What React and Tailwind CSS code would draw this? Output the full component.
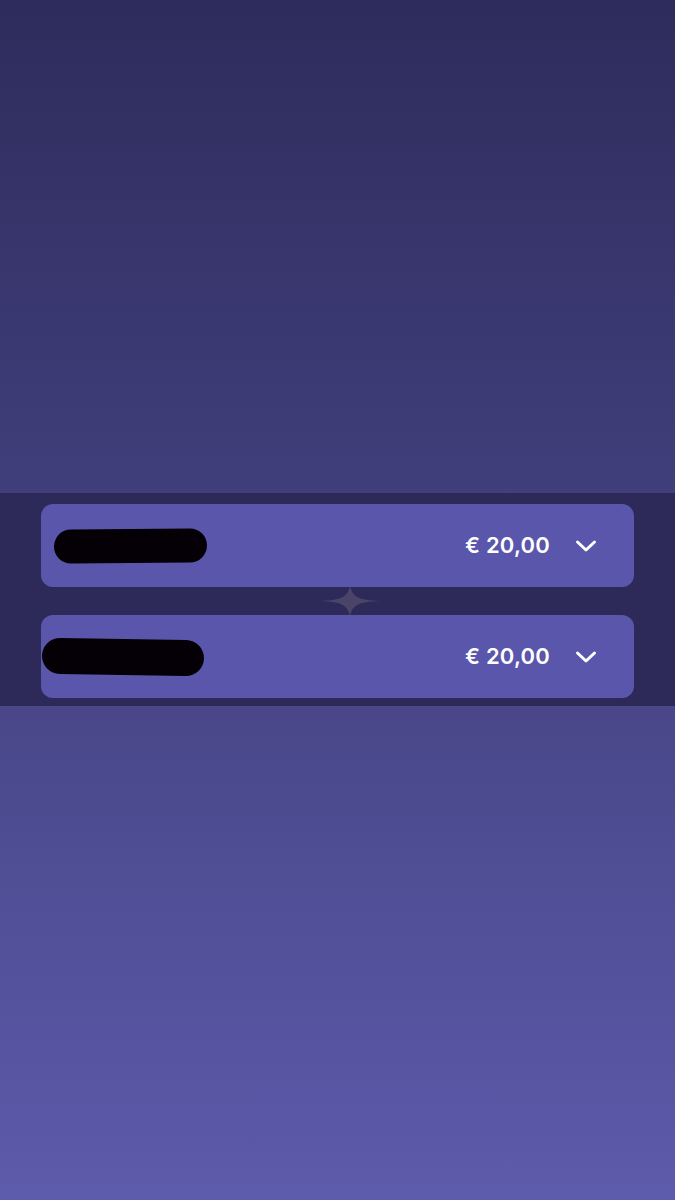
import React from 'react';

// bedragen in de lijst (namen zijn weggelakt in het origineel)
const rows = [
  { id: 1, amount: '€ 20,00', blob: 'ml-[13px] w-[153px] h-[34px] -rotate-[0.5deg]' },
  { id: 2, amount: '€ 20,00', blob: 'ml-[1px] w-[162px] h-[36px] rotate-[1deg]' },
];

const Chevron = () => (
  <svg width="22" height="14" viewBox="0 0 22 14" fill="none" className="text-white">
    <path d="M2.5 3 L11 11 L19.5 3" stroke="currentColor" strokeWidth="3" strokeLinecap="round" strokeLinejoin="round" />
  </svg>
);

const Row = ({ row }) => (
  <div className="h-[83px] rounded-[12px] bg-[#5a56ac] flex items-center pr-[37px]">
    <div className={`${row.blob} rounded-full bg-[#050005]`} />
    <div className="flex-1" />
    <span className="text-white text-[22px] font-semibold tracking-[0.2px] font-['Inter',sans-serif]">{row.amount}</span>
    <div className="ml-[25px] flex items-center">
      <Chevron />
    </div>
  </div>
);

export default function App() {
  return (
    <div className="min-h-[1200px] w-full bg-gradient-to-b from-[#2e2c5c] to-[#5d5bab] flex flex-col">
      <div className="h-[493px]" />
      <section className="relative bg-[#2d2a5a] pt-[11px] pb-[8px] px-[41px] flex flex-col gap-[28px] w-[675px]">
        <svg className="absolute left-[318px] top-[90px] opacity-60" width="64" height="36" viewBox="0 0 64 36">
          <path d="M32 2 C34 14 40 17 62 18 C40 19 34 22 32 34 C30 22 24 19 2 18 C24 17 30 14 32 2 Z" fill="#5e5672" />
          <circle cx="-12" cy="4" r="2" fill="#6a3a5a" />
        </svg>
        {rows.map((row) => (
          <div key={row.id} className="relative">
            <Row row={row} />
          </div>
        ))}
      </section>
      <div className="flex-1" />
    </div>
  );
}
